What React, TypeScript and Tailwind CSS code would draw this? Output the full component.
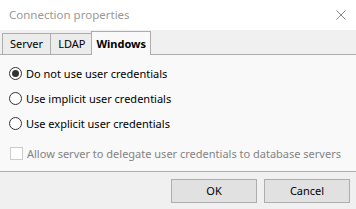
import { useState } from 'react';

function Radio({ checked, label, onClick }: { checked: boolean; label: string; onClick: () => void }) {
  return (
    <div className="flex h-[25px] items-center pl-[9px]" onClick={onClick}>
      <span className="flex h-[13px] w-[13px] items-center justify-center rounded-full border border-[#333333] bg-white">
        {checked && <span className="h-[7px] w-[7px] rounded-full bg-[#333333]" />}
      </span>
      <span className="ml-[4px] text-black">{label}</span>
    </div>
  );
}

export default function App() {
  const [mode, setMode] = useState(0);
  const [tab, setTab] = useState('Windows');
  const tabs = ['Server', 'LDAP', 'Windows'];
  const options = ['Do not use user credentials', 'Use implicit user credentials', 'Use explicit user credentials'];

  return (
    <div
      className="flex h-[209px] w-[356px] flex-col overflow-hidden whitespace-nowrap bg-[#f0f0f0] text-[11px] leading-[16px]"
      style={{ fontFamily: '"Noto Sans", "Liberation Sans", sans-serif' }}
    >
      {/* title bar */}
      <div className="flex h-[30px] shrink-0 items-center justify-between bg-white pl-[9px] pr-[9px]">
        <span className="text-[11.5px] text-[#999999]">Connection properties</span>
        <svg width="10" height="10" viewBox="0 0 10 10" className="mr-[1px]">
          <path d="M0.5 0.5 L9.5 9.5 M9.5 0.5 L0.5 9.5" stroke="#8a8a8a" strokeWidth="1" />
        </svg>
      </div>

      {/* tabs */}
      <div className="flex h-[24px] shrink-0 items-end pl-[2px] pt-[1px]">
        {tabs.map((t) => {
          const active = t === tab;
          return (
            <div
              key={t}
              onClick={() => setTab(t)}
              className={
                active
                  ? 'relative z-10 -mb-px -ml-px flex h-[24px] items-center border border-b-0 border-[#adadad] bg-[#f9f9f9] px-[4px] font-bold text-black'
                  : 'flex h-[21px] items-center border border-r-0 border-b-0 border-[#adadad] bg-[#ececec] px-[7px] text-black'
              }
            >
              {t}
            </div>
          );
        })}
      </div>

      {/* panel */}
      <div className="h-[117px] shrink-0 border-t border-[#adadad] bg-[#f9f9f9] pt-[6px]">
        {options.map((o, i) => (
          <Radio key={o} checked={mode === i} label={o} onClick={() => setMode(i)} />
        ))}
        <div className="mt-[5px] flex h-[25px] items-center pl-[10px]">
          <span className="h-[13px] w-[13px] border border-[#cccccc] bg-white" />
          <span className="ml-[4px] text-[#838383]">Allow server to delegate user credentials to database servers</span>
        </div>
      </div>
      <div className="h-px shrink-0 bg-[#adadad]" />

      {/* buttons */}
      <div className="flex justify-end gap-[7px] pr-[6px] pt-[7px]">
        <button className="h-[24px] w-[86px] border border-[#adadad] bg-[#e1e1e1] text-black">OK</button>
        <button className="h-[24px] w-[86px] border border-[#adadad] bg-[#e1e1e1] text-black">Cancel</button>
      </div>
    </div>
  );
}
